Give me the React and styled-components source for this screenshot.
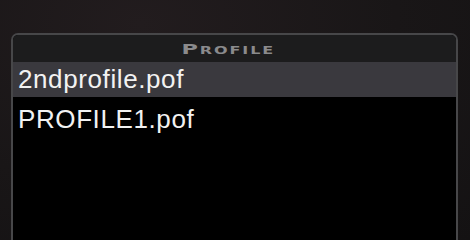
import React from 'react';
import styled, { createGlobalStyle } from 'styled-components';

const GlobalStyle = createGlobalStyle`
  html, body {
    margin: 0;
    padding: 0;
    height: 100%;
    overflow: hidden;
  }
  body {
    background: radial-gradient(ellipse at 30% 10%, #221c1e 0%, #191617 55%, #141213 100%);
    font-family: 'Liberation Sans', Arial, sans-serif;
  }
  #root {
    height: 100%;
  }
`;

const Screen = styled.div`
  height: 240px;
  padding: 33px 12px 0 11px;
  box-sizing: border-box;
  display: flex;
`;

const Panel = styled.section`
  flex: 1;
  display: flex;
  flex-flow: column;
  border: 2px solid #474749;
  border-bottom: none;
  border-radius: 7px 7px 0 0;
  background: #000;
  overflow: hidden;
`;

const PanelHeader = styled.header`
  height: 26px;
  flex: none;
  display: flex;
  align-items: center;
  justify-content: center;
  background: #1c1c1d;
  padding: 1px 12px 0 0;
`;

// the original uses a wide, extended face; stretch DejaVu to get close
const Title = styled.span`
  display: inline-block;
  color: #8a8a8c;
  font-family: 'DejaVu Sans', sans-serif;
  font-weight: bold;
  font-size: 14px;
  font-variant: small-caps;
  letter-spacing: 1.2px;
  transform: scaleX(1.6);
`;

const List = styled.ul`
  list-style: none;
  margin: 0;
  padding: 0;
  flex: 1;
  display: flex;
  flex-flow: column;
  gap: 5px;
`;

const Row = styled.li`
  height: 35px;
  display: flex;
  align-items: center;
  padding-left: 5px;
  background: ${({ selected }) => (selected ? '#3a393e' : 'transparent')};
  color: #f2f2f2;
  font-size: 26px;
  letter-spacing: 0.6px;
`;

const files = ['2ndprofile.pof', 'PROFILE1.pof'];

const App = () => {
  return (
    <>
      <GlobalStyle />
      <Screen>
        <Panel>
          <PanelHeader>
            <Title>Profile</Title>
          </PanelHeader>
          <List>
            {files.map((name, i) => (
              <Row key={name} selected={i === 0}>
                {name}
              </Row>
            ))}
          </List>
        </Panel>
      </Screen>
    </>
  );
};

export default App;
